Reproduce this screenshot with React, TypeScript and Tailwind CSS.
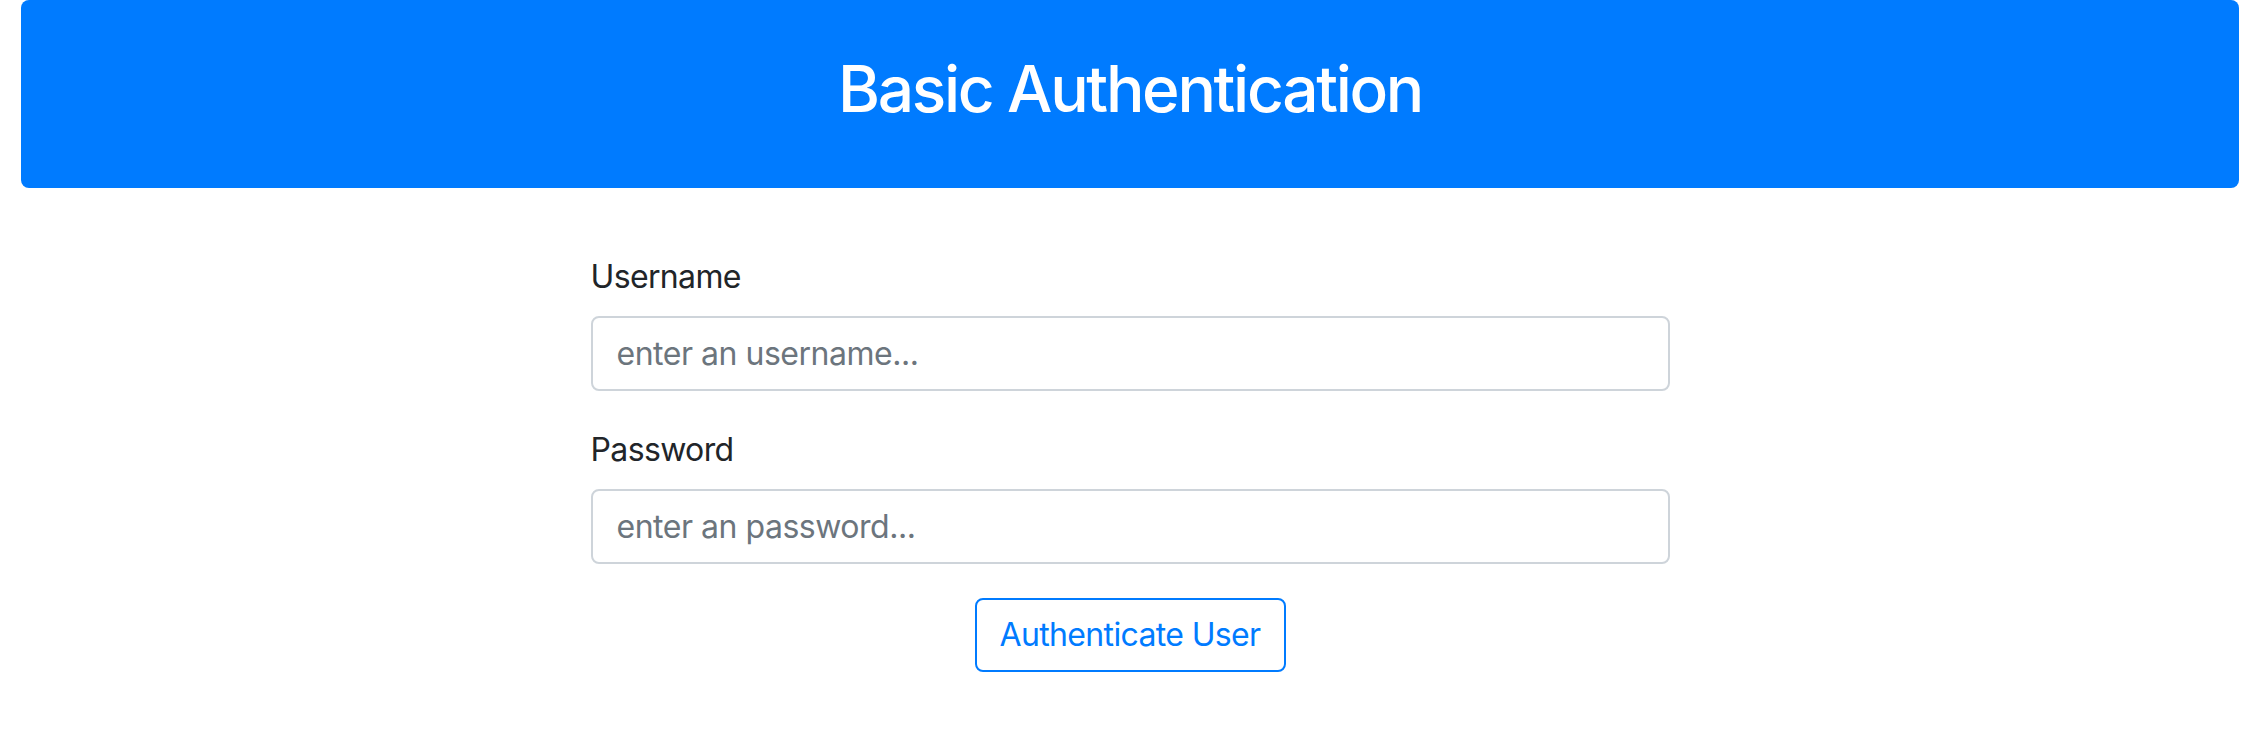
import { useState } from 'react';

const font = { fontFamily: 'Inter, "Liberation Sans", Arial, sans-serif' };

function Field({
  label,
  placeholder,
  type,
  value,
  onChange,
}: {
  label: string;
  placeholder: string;
  type: string;
  value: string;
  onChange: (v: string) => void;
}) {
  return (
    <div className="flex flex-col">
      <label className="mt-[2px] mb-[15px] text-[32px] leading-[48px] tracking-[-0.02em] text-[#212529]">{label}</label>
      <input
        type={type}
        value={value}
        onChange={(e) => onChange(e.target.value)}
        placeholder={placeholder}
        className="h-[75px] w-full rounded-lg border-2 border-[#ced4da] bg-white px-6 text-[32px] tracking-[-0.015em] text-[#495057] outline-none placeholder:text-[#6c757d]"
      />
    </div>
  );
}

export default function App() {
  const [username, setUsername] = useState('');
  const [password, setPassword] = useState('');

  return (
    <div className="min-h-screen bg-white" style={font}>
      {/* Header */}
      <div className="px-[21px]">
        <div className="flex h-[188px] items-start justify-center rounded-lg bg-[#007bff] pt-[50px]">
          <h1 className="text-[64px] leading-[77px] font-medium tracking-[-0.036em] text-white">
            Basic Authentication
          </h1>
        </div>
      </div>

      {/* Form */}
      <div className="mx-auto mt-[63px] flex w-[1079px] flex-col">
        <Field
          label="Username"
          placeholder="enter an username..."
          type="text"
          value={username}
          onChange={setUsername}
        />
        <div className="mt-[33px]">
          <Field
            label="Password"
            placeholder="enter an password..."
            type="password"
            value={password}
            onChange={setPassword}
          />
        </div>
        <div className="mt-[34px] flex justify-center">
          <button className="h-[74px] w-[311px] rounded-lg border-2 border-[#007bff] bg-white text-[32px] tracking-[-0.02em] text-[#007bff] hover:bg-[#007bff] hover:text-white">
            Authenticate User
          </button>
        </div>
      </div>
    </div>
  );
}
